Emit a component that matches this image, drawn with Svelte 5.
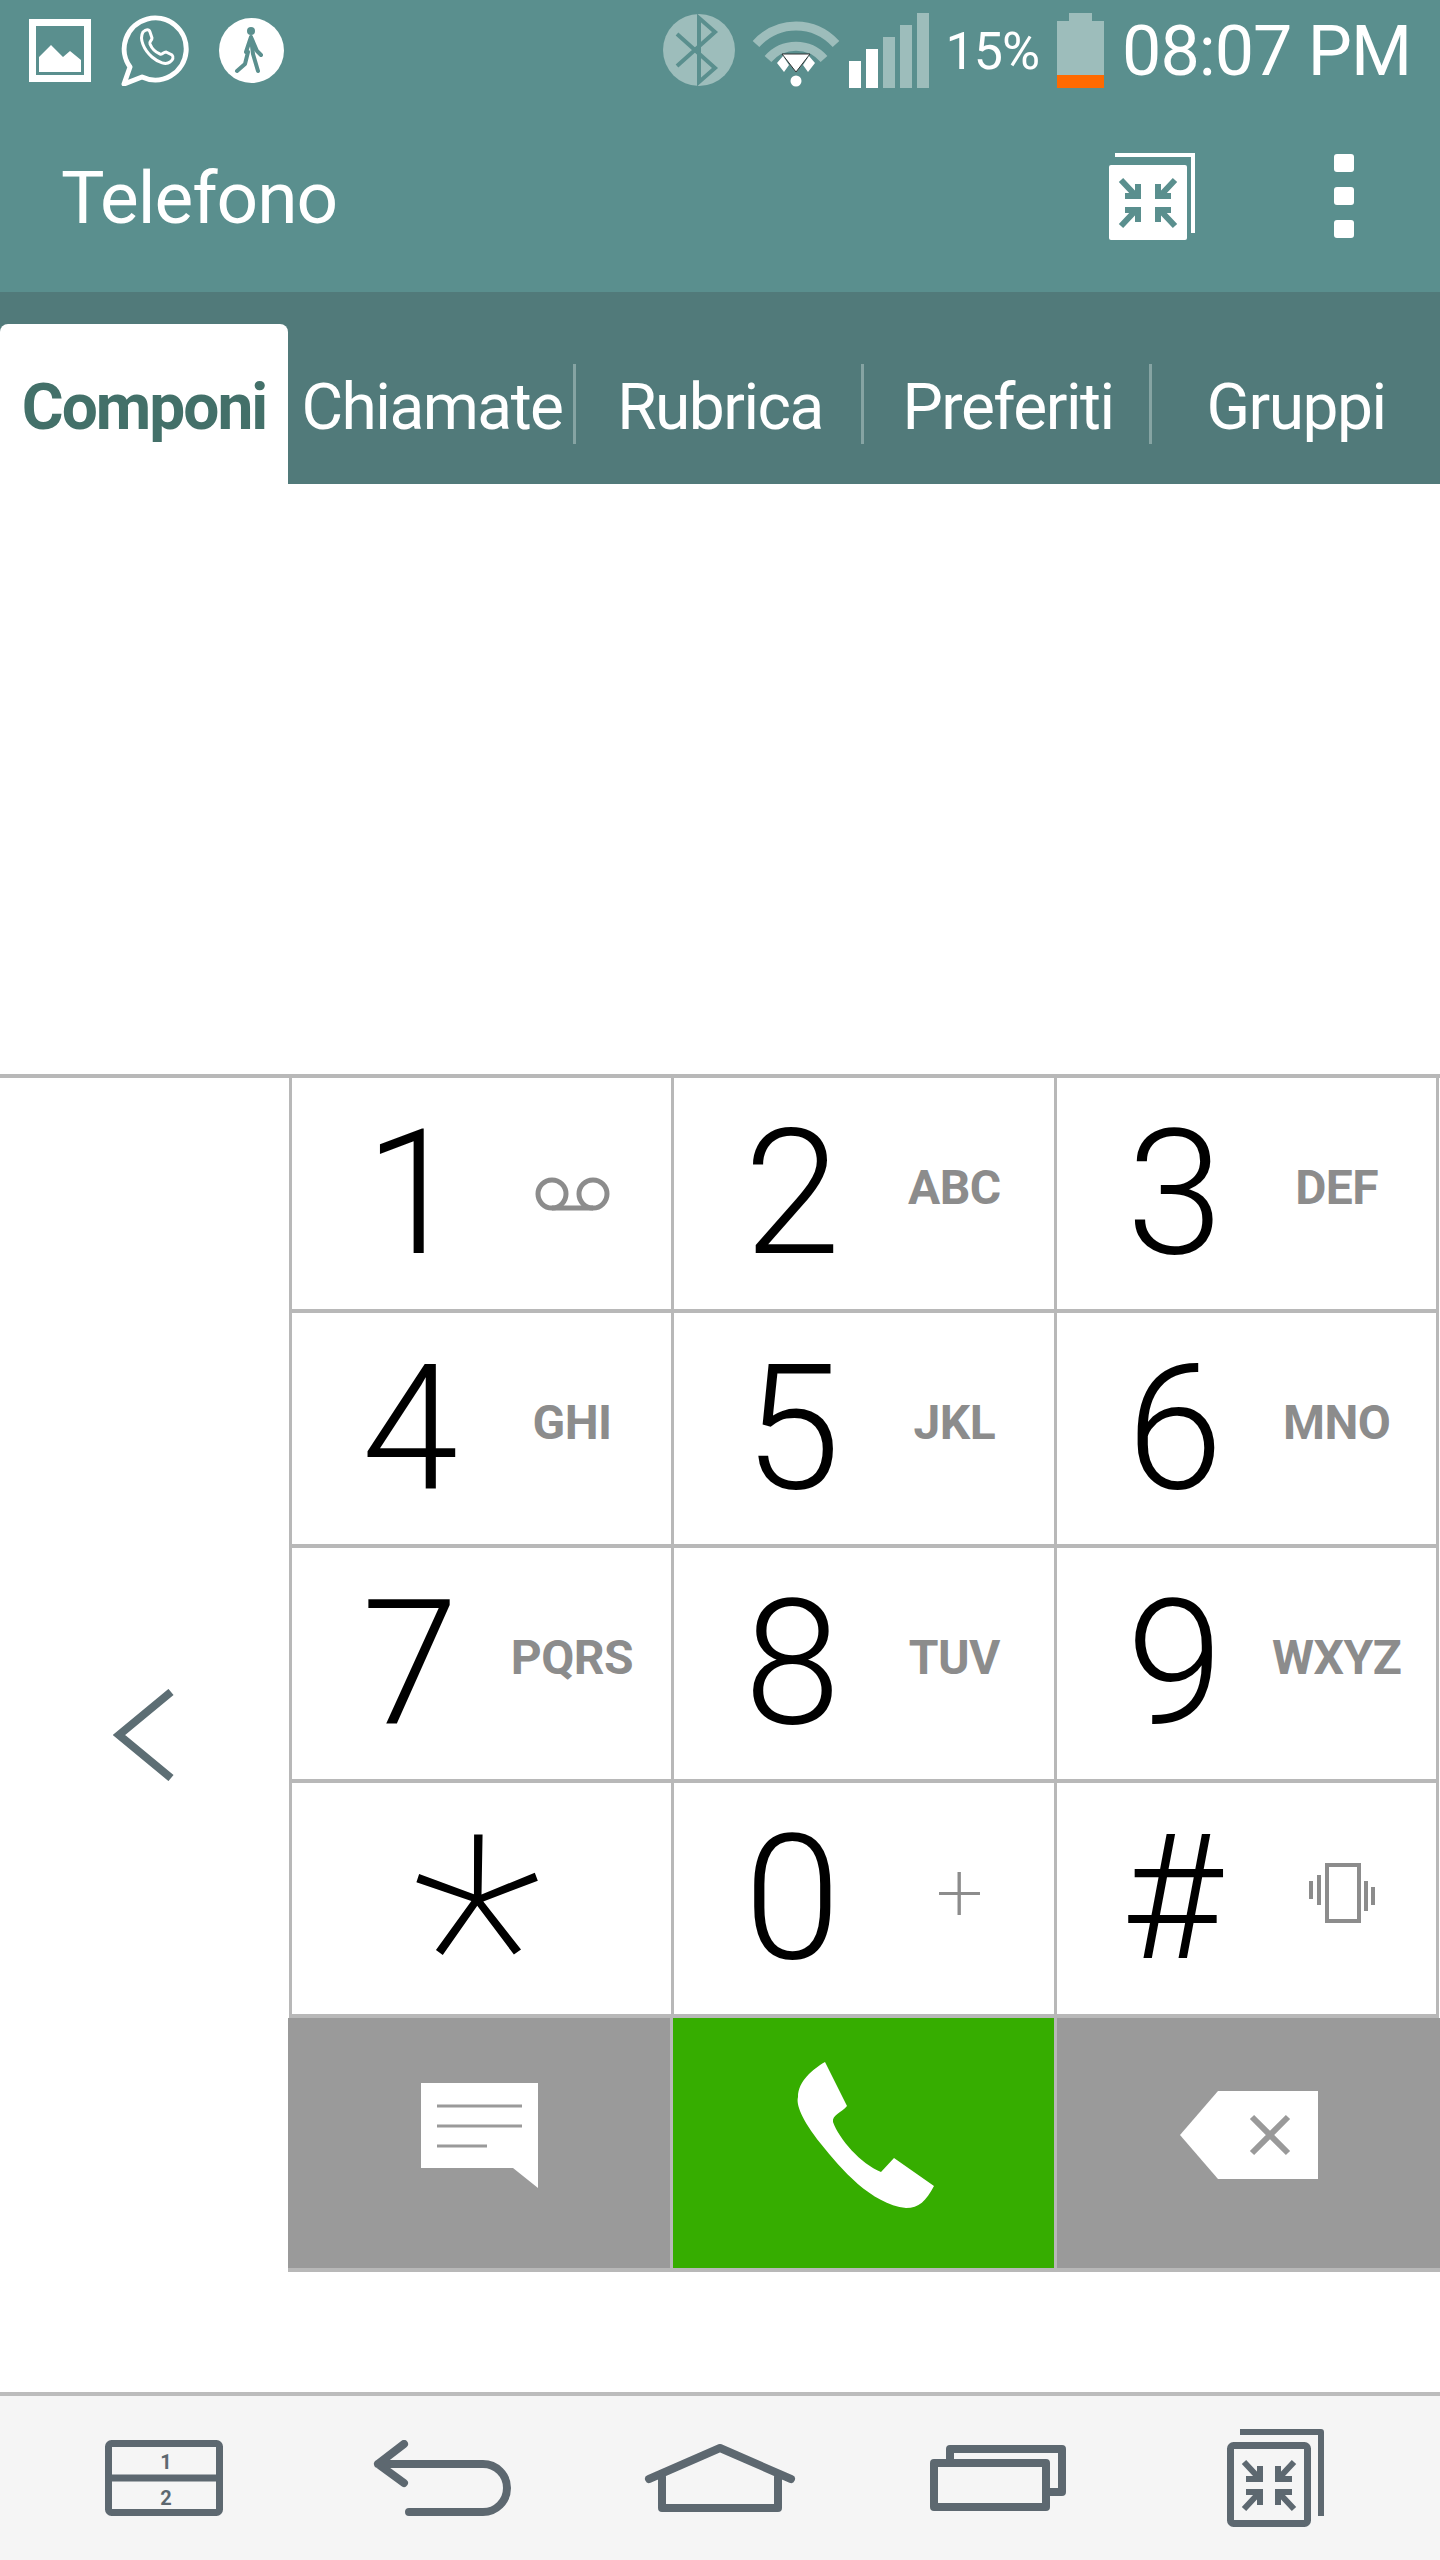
<script>
  const tabs = ['Componi', 'Chiamate', 'Rubrica', 'Preferiti', 'Gruppi'];
  const keys = [
    { d: '1', icon: 'voicemail' },
    { d: '2', l: 'ABC' },
    { d: '3', l: 'DEF' },
    { d: '4', l: 'GHI' },
    { d: '5', l: 'JKL' },
    { d: '6', l: 'MNO' },
    { d: '7', l: 'PQRS' },
    { d: '8', l: 'TUV' },
    { d: '9', l: 'WXYZ' },
    { d: '*', star: true },
    { d: '0', l: '+', plus: true },
    { d: '#', icon: 'vibrate' }
  ];
</script>

<div class="phone">
  <header class="top">
    <div class="status">
      <svg class="ic-image" width="62" height="63" viewBox="0 0 62 63">
        <rect x="3.5" y="3.5" width="55" height="56" fill="none" stroke="#fff" stroke-width="7" />
        <path d="M10 53V38L22 26l12 12 7-6 11 9v12z" fill="#fff" />
      </svg>
      <svg class="ic-wa" width="68" height="72" viewBox="0 0 68 72">
        <path d="M3 70l6-17A31 31 0 1 1 21 63z" fill="none" stroke="#fff" stroke-width="5" stroke-linejoin="round" />
        <path d="M22 18c3-3 6-3 7 0l2 6c0 3-3 3-2 6 2 5 5 8 10 10 3 1 3-2 6-2l6 3c2 2 1 5-2 7-4 3-11 1-18-5-8-7-13-18-9-25z" fill="none" stroke="#fff" stroke-width="3" />
      </svg>
      <svg class="ic-walk" width="65" height="65" viewBox="0 0 65 65">
        <circle cx="32.500" cy="32.500" r="32.500" fill="#fff" />
        <circle cx="32" cy="13" r="4" fill="#5a8f8e" />
        <path d="M32 19l-5 15M32 19l6 14 4 4M32 20l2 16 5 17M29 34l-3 12-8 7" fill="none" stroke="#5a8f8e" stroke-width="4" stroke-linecap="round" stroke-linejoin="round" />
      </svg>
      <div class="status-right">
        <svg class="ic-bt" width="72" height="72" viewBox="0 0 72 72">
          <circle cx="36" cy="36" r="36" fill="#9dbdbb" />
          <path d="M14 20l38 34-16 14V4l16 14-38 34" fill="none" stroke="#5a8f8e" stroke-width="4" />
        </svg>
        <svg class="ic-wifi" width="88" height="67" viewBox="0 0 88 67">
          <path d="M4 24C26 0 62 0 84 24" fill="none" stroke="#9dbdbb" stroke-width="9" />
          <path d="M16 39C31 22 57 22 72 39" fill="none" stroke="#9dbdbb" stroke-width="9" />
          <path d="M30 34h28L44 52z" fill="#fff" stroke="#333" stroke-width="1" />
          <path d="M25 43l6-7 6 9-5 7zM63 43l-6-7-6 9 5 7z" fill="#fff" />
          <circle cx="44" cy="61" r="5.500" fill="#fff" />
        </svg>
        <div class="signal">
          <span class="bar on" style="height:27px"></span>
          <span class="bar on" style="height:39px"></span>
          <span class="bar" style="height:51px"></span>
          <span class="bar" style="height:63px"></span>
          <span class="bar" style="height:75px"></span>
        </div>
        <span class="pct">15%</span>
        <div class="battery">
          <span class="nub"></span>
          <span class="cell"><span class="charge"></span></span>
        </div>
        <span class="clock">08:07 PM</span>
      </div>
    </div>

    <div class="actionbar">
      <h1>Telefono</h1>
      <svg class="ic-mini" width="86" height="87" viewBox="0 0 86 87">
        <path d="M6 0h80v80h-4V4H6z" fill="#fff" />
        <rect x="0" y="12" width="78" height="75" rx="2" fill="#fff" />
        <g fill="none" stroke="#5a8f8e" stroke-width="6">
          <path d="M12 27l16 17M16 43h13V31M66 27L50 44M62 43H49V31M12 73l16-17M16 57h13v12M66 73L50 56M62 57H49v12" />
        </g>
      </svg>
      <div class="dots">
        <span></span>
        <span></span>
        <span></span>
      </div>
    </div>

    <nav class="tabs">
      {#each tabs as tab, i}
        <div class="tab" class:active={i === 0} class:sep={i > 0 && i < 4}>{tab}</div>
      {/each}
    </nav>
  </header>

  <div class="number"></div>

  <section class="dialer">
    <div class="side">
      <svg width="62" height="92" viewBox="0 0 62 92">
        <path d="M58 3L6 46l52 43" fill="none" stroke="#5d6e74" stroke-width="8" />
      </svg>
    </div>
    <div class="pad">
      <div class="grid">
        {#each keys as key}
          <div class="key" class:star={key.star}>
            <span class="digit" class:one={key.d === '1'} class:hash={key.d === '#'}>{key.d}</span>
            {#if key.l}
              <span class="letters" class:plus={key.plus}>{key.l}</span>
            {:else if key.icon === 'voicemail'}
              <svg class="extra" width="75" height="34" viewBox="0 0 75 34">
                <g fill="none" stroke="#8c8c8c" stroke-width="5">
                  <circle cx="17" cy="17" r="14" />
                  <circle cx="58" cy="17" r="14" />
                  <path d="M17 31h41" />
                </g>
              </svg>
            {:else if key.icon === 'vibrate'}
              <svg class="extra vib" width="66" height="60" viewBox="0 0 66 60">
                <rect x="18" y="2" width="32" height="56" fill="none" stroke="#8c8c8c" stroke-width="4" />
                <path d="M10 12v30M2 18v18M57 18v30M64 24v18" stroke="#8c8c8c" stroke-width="4" />
              </svg>
            {/if}
          </div>
        {/each}
      </div>
      <div class="actions">
        <button class="act" aria-label="Messaggio">
          <svg width="117" height="105" viewBox="0 0 117 105">
            <path d="M0 0h117v105L92 85H0z" fill="#fff" />
            <path d="M16 23h85M16 43h85M16 63h50" stroke="#9a9a9a" stroke-width="3" />
          </svg>
        </button>
        <button class="act call" aria-label="Chiama">
          <svg width="146" height="152" viewBox="0 0 146 152">
            <path d="M34 3L56 47C50 54 41 56 42 63 48 80 70 105 90 113L103 99 143 127C135 142 128 149 115 149 80 145 50 110 30 85 10 60 5 45 7 38 7 22 22 10 34 3z" fill="#fff" />
          </svg>
        </button>
        <button class="act" aria-label="Cancella">
          <svg width="138" height="88" viewBox="0 0 138 88">
            <path d="M38 0h100v88H38L0 44z" fill="#fff" />
            <path d="M72 26l36 36M108 26L72 62" stroke="#9a9a9a" stroke-width="6" />
          </svg>
        </button>
      </div>
    </div>
  </section>

  <footer class="nav">
    <svg width="118" height="76" viewBox="0 0 118 76">
      <rect x="3.500" y="3.500" width="111" height="69" rx="3" fill="none" stroke="#5d6870" stroke-width="7" />
      <path d="M3 38h112" stroke="#5d6870" stroke-width="7" />
      <text x="61" y="29" class="navnum">1</text>
      <text x="61" y="65" class="navnum">2</text>
    </svg>
    <svg width="138" height="76" viewBox="0 0 138 76">
      <path d="M31 4L5 24l26 19M5 24h105a24 24 0 0 1 0 48H36" fill="none" stroke="#5d6870" stroke-width="8" stroke-linecap="round" stroke-linejoin="round" />
    </svg>
    <svg width="152" height="68" viewBox="0 0 152 68">
      <path d="M5 35L76 4l71 31M18 30v34h116V30" fill="none" stroke="#5d6870" stroke-width="8" stroke-linecap="round" stroke-linejoin="round" />
    </svg>
    <svg width="136" height="66" viewBox="0 0 136 66">
      <path d="M20 14V4h112v43h-13" fill="none" stroke="#5d6870" stroke-width="8" stroke-linejoin="round" />
      <rect x="4" y="18" width="112" height="44" fill="none" stroke="#5d6870" stroke-width="8" stroke-linejoin="round" />
    </svg>
    <svg width="98" height="98" viewBox="0 0 98 98">
      <path d="M13 3h81v84" fill="none" stroke="#5d6870" stroke-width="6" stroke-linejoin="round" />
      <rect x="3.500" y="16.500" width="77" height="78" rx="3" fill="none" stroke="#5d6870" stroke-width="7" />
      <path d="M17 33l14 15M19 50h14V37M67 33L53 48M65 50H51V37M17 80l14-15M19 63h14v13M67 80L53 65M65 63H51v13" fill="none" stroke="#5d6870" stroke-width="6" />
    </svg>
  </footer>
</div>

<style>
  :global(body) {
    margin: 0;
    background: #fff;
  }

  .phone {
    width: 1440px;
    height: 2560px;
    display: flex;
    flex-direction: column;
    font-family: Roboto, "Liberation Sans", sans-serif;
    overflow: hidden;
  }

  .top {
    background: #5a8f8e;
    color: #fff;
  }

  .status {
    height: 100px;
    display: flex;
    align-items: center;
    padding: 0 29px 0 29px;
    gap: 30px;
  }

  .status-right {
    margin-left: auto;
    display: flex;
    align-items: center;
  }

  .ic-wifi {
    margin-left: 17px;
    margin-top: 6px;
  }

  .signal {
    margin-left: 9px;
    display: flex;
    align-items: flex-end;
    gap: 5px;
    height: 75px;
  }

  .bar {
    width: 12px;
    background: #9dbdbb;
  }

  .bar.on {
    background: #fff;
  }

  .pct {
    margin-left: 17px;
    margin-top: 2px;
    font-size: 52px;
    font-weight: 400;
    letter-spacing: -1px;
  }

  .battery {
    margin-left: 18px;
    width: 47px;
    height: 75px;
    display: flex;
    flex-direction: column;
    align-items: center;
  }

  .nub {
    width: 23px;
    height: 8px;
    background: #9dbdbb;
  }

  .cell {
    flex: 1;
    width: 100%;
    background: #9dbdbb;
    display: flex;
    align-items: flex-end;
  }

  .charge {
    width: 100%;
    height: 13px;
    background: #ff6a00;
  }

  .clock {
    margin-left: 18px;
    margin-top: 2px;
    font-size: 70px;
    font-weight: 400;
    letter-spacing: -1px;
  }

  .actionbar {
    height: 192px;
    display: flex;
    align-items: center;
    padding-left: 61px;
  }

  h1 {
    margin: 4px 0 0;
    font-size: 73px;
    font-weight: 400;
    letter-spacing: -1px;
    flex: 1;
  }

  .dots {
    margin-left: 139px;
    margin-right: 86px;
    display: flex;
    flex-direction: column;
    gap: 15px;
  }

  .dots span {
    width: 20px;
    height: 18px;
    border-radius: 3px;
    background: #fff;
  }

  .tabs {
    height: 192px;
    background: #517a7a;
    display: grid;
    grid-template-columns: repeat(5, 288px);
    align-items: end;
  }

  .tab {
    height: 160px;
    box-sizing: border-box;
    padding-top: 6px;
    display: flex;
    align-items: center;
    justify-content: center;
    font-size: 64px;
    font-weight: 400;
    letter-spacing: -1.5px;
    position: relative;
  }

  .tab.sep::after {
    content: '';
    position: absolute;
    right: 0;
    top: 40px;
    width: 3px;
    height: 80px;
    background: #86a4a3;
  }

  .tab.active {
    background: #fff;
    color: #437069;
    font-weight: 700;
    letter-spacing: -2px;
    border-radius: 8px 8px 0 0;
  }

  .number {
    height: 590px;
    background: #fff;
  }

  .dialer {
    height: 1318px;
    box-sizing: border-box;
    border-top: 4px solid #b8b8b8;
    display: flex;
  }

  .side {
    width: 288px;
    display: flex;
    align-items: center;
    justify-content: center;
    flex: none;
  }

  .pad {
    flex: 1;
  }

  .grid {
    margin-left: 1px;
    margin-right: 1px;
    padding: 0 3px 4px;
    display: grid;
    grid-template-columns: repeat(3, 1fr);
    grid-auto-rows: 231px;
    gap: 4px 3px;
    background: #b8b8b8;
  }

  .key {
    background: #fff;
    display: grid;
    grid-template-columns: 236px 88px;
    grid-template-rows: 231px;
    align-items: center;
  }

  .key.star {
    grid-template-columns: 1fr;
  }

  .digit {
    justify-self: center;
    font-size: 174px;
    font-weight: 300;
    line-height: 1;
    color: #000;
  }

  .digit.one {
    margin-left: 6px;
  }

  .digit.hash {
    margin-right: 6px;
  }

  .key.star .digit {
    align-self: start;
    height: 220px;
    padding-top: 11px;
    margin-right: 10px;
    font-size: 310px;
    font-weight: 100;
  }

  .letters {
    justify-self: center;
    font-size: 48px;
    font-weight: 700;
    color: #8c8c8c;
    margin-top: -12px;
    letter-spacing: -0.5px;
    white-space: nowrap;
  }

  .letters.plus {
    font-size: 84px;
    font-weight: 200;
    margin: -12px 0 0 10px;
  }

  .extra {
    justify-self: center;
  }

  .extra.vib {
    margin: -12px 0 0 10px;
  }

  .actions {
    height: 254px;
    box-sizing: border-box;
    display: grid;
    grid-template-columns: 382px 381px 1fr;
    gap: 3px;
    background: #b8b8b8;
    border-bottom: 4px solid #b8b8b8;
  }

  .act {
    border: 0;
    padding: 0 0 16px;
    background: #9a9a9a;
    display: flex;
    align-items: center;
    justify-content: center;
  }

  .act.call {
    background: #36ad00;
  }

  .nav {
    flex: 1;
    box-sizing: border-box;
    border-top: 4px solid #bcbcbc;
    background: #f5f5f5;
    padding: 0 25px;
    display: grid;
    grid-template-columns: repeat(5, 278px);
    align-items: center;
    justify-items: center;
  }

  .navnum {
    font-size: 20px;
    font-weight: 700;
    fill: #5d6870;
    text-anchor: middle;
  }
</style>
